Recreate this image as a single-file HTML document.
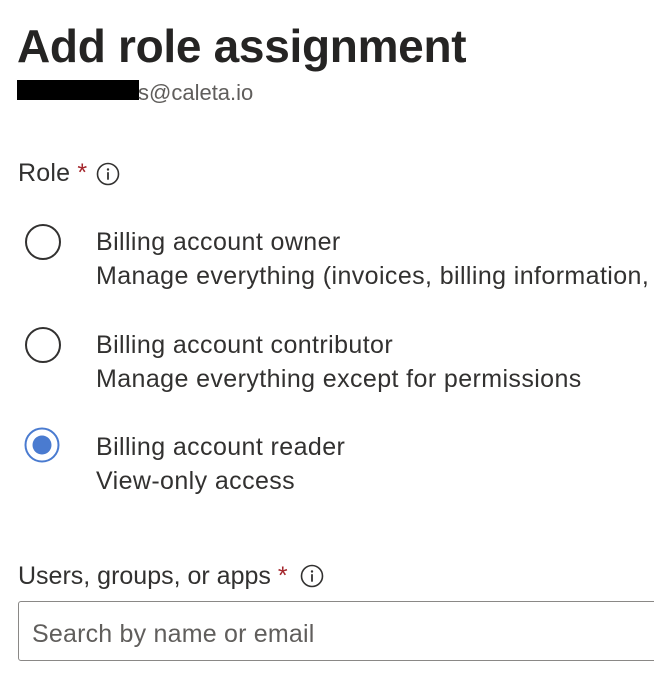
<!DOCTYPE html>
<html><head><meta charset="utf-8"><style>
html,body{margin:0;padding:0;background:#fff;width:654px;height:674px;overflow:hidden;position:relative;font-family:"Liberation Sans",sans-serif;color:#323130}
.t{position:absolute;line-height:1;white-space:nowrap}
.b{font-size:25px;letter-spacing:0.4px;left:96px;color:#323130}
.star{color:#a4262c}
svg{position:absolute}
</style></head><body>
<div class="t" style="left:17px;top:23px;font-size:46px;font-weight:bold;letter-spacing:-0.3px;color:#252423">Add role assignment</div>
<div style="position:absolute;left:17px;top:80px;width:122px;height:20px;background:#000"></div>
<div class="t" style="left:138px;top:82px;font-size:22px;color:#605e5c">s@caleta.io</div>

<div class="t" style="left:18px;top:161px;font-size:25px;letter-spacing:0.2px">Role <span class="star">*</span></div>
<svg style="left:96px;top:162px" width="24" height="24" viewBox="0 0 24 24"><circle cx="12" cy="12" r="10.5" fill="none" stroke="#323130" stroke-width="1.6"/><circle cx="12" cy="7.5" r="1.2" fill="#323130"/><rect x="11.1" y="10.2" width="1.8" height="7.5" fill="#323130"/></svg>

<svg style="left:24px;top:223px" width="38" height="38"><circle cx="19" cy="19" r="17" fill="none" stroke="#323130" stroke-width="2"/></svg>
<div class="t b" style="top:230px">Billing account owner</div>
<div class="t b" style="top:264px">Manage everything (invoices, billing information,</div>

<svg style="left:24px;top:326px" width="38" height="38"><circle cx="19" cy="19" r="17" fill="none" stroke="#323130" stroke-width="2"/></svg>
<div class="t b" style="top:333px">Billing account contributor</div>
<div class="t b" style="top:367px">Manage everything except for permissions</div>

<svg style="left:23px;top:426px" width="38" height="38"><circle cx="19" cy="19" r="16.5" fill="none" stroke="#4a7bd0" stroke-width="2"/><circle cx="19" cy="19" r="9.5" fill="#4a7bd0"/></svg>
<div class="t b" style="top:435px">Billing account reader</div>
<div class="t b" style="top:469px">View-only access</div>

<div class="t" style="left:18px;top:564px;font-size:25px;letter-spacing:0px">Users, groups, or apps <span class="star">*</span></div>
<svg style="left:300px;top:564px" width="24" height="24" viewBox="0 0 24 24"><circle cx="12" cy="12" r="10.5" fill="none" stroke="#323130" stroke-width="1.6"/><circle cx="12" cy="7.5" r="1.2" fill="#323130"/><rect x="11.1" y="10.2" width="1.8" height="7.5" fill="#323130"/></svg>

<div style="position:absolute;left:18px;top:601px;width:660px;height:60px;border:1.5px solid #8a8886;border-radius:3px;box-sizing:border-box"></div>
<div class="t" style="left:32px;top:622px;font-size:25px;letter-spacing:0.2px;color:#605e5c">Search by name or email</div>
</body></html>
